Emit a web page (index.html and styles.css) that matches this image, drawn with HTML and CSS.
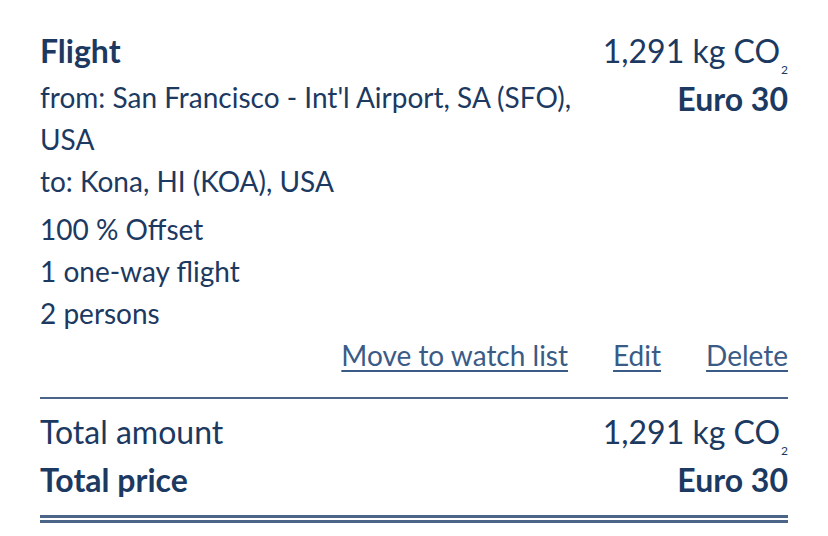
FILE: index.html
```html
<!DOCTYPE html>
<html>
<head>
<meta charset="utf-8">
<link rel="stylesheet" href="styles.css">
</head>
<body>
<div class="cart">
  <div class="item">
    <div class="details">
      <div class="title">Flight</div>
      <div class="route">
        <div>from: San Francisco - Int'l Airport, SA (SFO), USA</div>
        <div>to: Kona, HI (KOA), USA</div>
      </div>
      <div class="meta">
        <div>100 % Offset</div>
        <div>1 one-way flight</div>
        <div>2 persons</div>
      </div>
    </div>
    <div class="amounts">
      <div class="co2">1,291 kg CO<sub>2</sub></div>
      <div class="price">Euro 30</div>
    </div>
  </div>
  <div class="actions">
    <a href="#">Move to watch list</a>
    <a href="#">Edit</a>
    <a href="#">Delete</a>
  </div>
  <div class="totals">
    <div class="row">
      <span>Total amount</span>
      <span class="co2">1,291 kg CO<sub>2</sub></span>
    </div>
    <div class="row strong">
      <span>Total price</span>
      <span>Euro 30</span>
    </div>
  </div>
  <div class="double"></div>
</div>
</body>
</html>
```

FILE: styles.css
```css
html, body {
  margin: 0;
  padding: 0;
  background: #ffffff;
}
body {
  font-family: Lato, "Open Sans", sans-serif;
  color: #1c3961;
}
.cart {
  width: 748px;
  padding: 27px 40px 0 40px;
}
.item {
  display: flex;
  justify-content: space-between;
}
.details {
  width: 540px;
  font-size: 28px;
  line-height: 42px;
}
.title {
  font-size: 32px;
  font-weight: 700;
  line-height: 48px;
  margin-bottom: 1px;
}
.route {
  margin-bottom: 6px;
}
.amounts {
  text-align: right;
  font-size: 32px;
  line-height: 48px;
}
.co2 {
  white-space: nowrap;
}
.co2 sub {
  font-size: 12px;
  vertical-align: -11px;
  line-height: 0;
  margin-left: 1px;
}
.price {
  font-weight: 700;
}
.actions {
  display: flex;
  justify-content: flex-end;
  gap: 45px;
  font-size: 28px;
  line-height: 42px;
  padding-bottom: 21px;
  border-bottom: 2px solid #4a6588;
}
.actions a {
  color: #3b5b87;
  text-decoration: underline;
  text-decoration-thickness: 2px;
  text-underline-offset: 4px;
}
.totals {
  padding-top: 9px;
  padding-bottom: 11px;
}
.row {
  display: flex;
  justify-content: space-between;
  font-size: 32px;
  line-height: 48px;
}
.row.strong {
  font-weight: 700;
}
.double {
  height: 2px;
  border-top: 3px solid #4a6588;
  border-bottom: 3px solid #4a6588;
}
```
